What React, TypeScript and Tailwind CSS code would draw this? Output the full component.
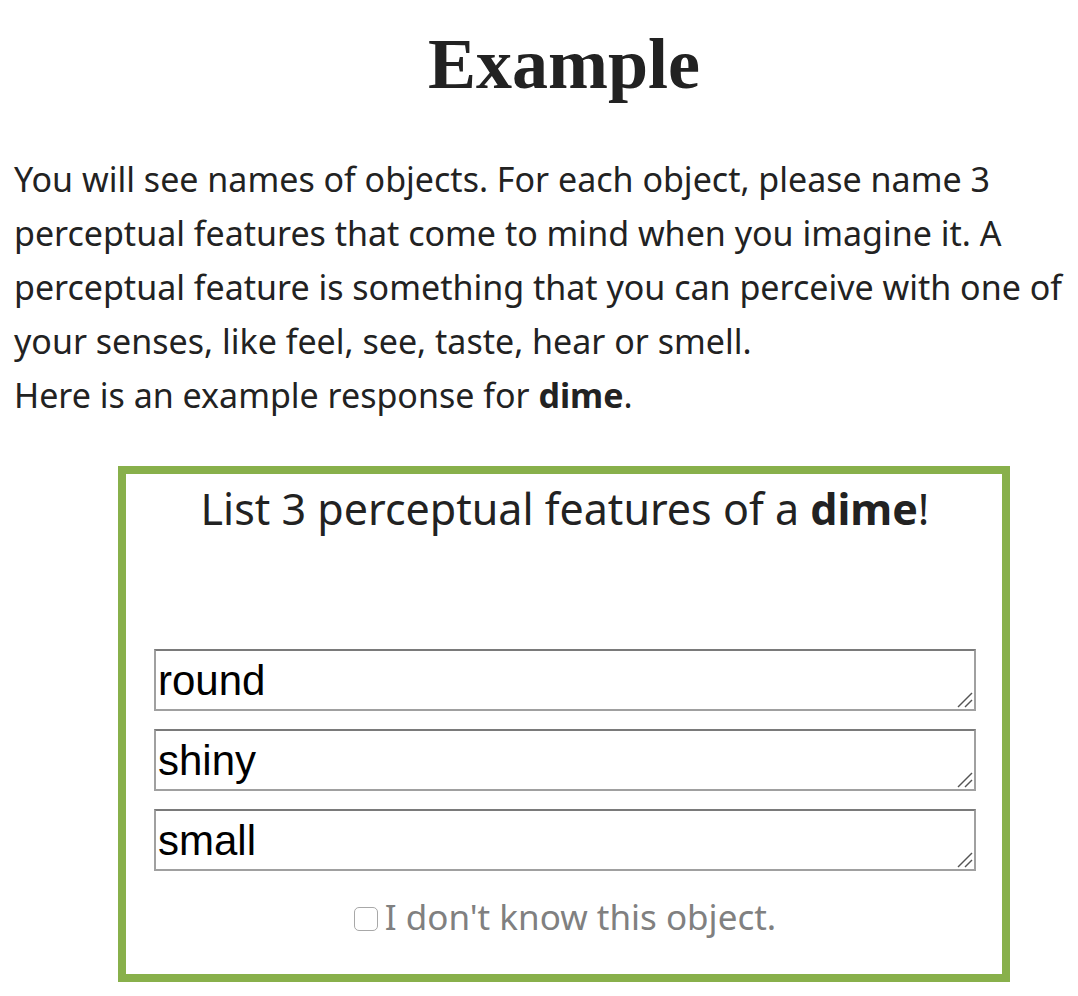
import React from "react";

const answers = ["round", "shiny", "small"];

function ResizeHandle() {
  return (
    <svg className="pointer-events-none absolute bottom-[3px] right-[3px]" width="17" height="17" viewBox="0 0 17 17">
      <path d="M16 2 L2 16" stroke="#555" strokeWidth="1.4" />
      <path d="M16 9 L9 16" stroke="#555" strokeWidth="1.4" />
    </svg>
  );
}

function Answer({ value }: { value: string }) {
  return (
    <div className="relative">
      <textarea
        readOnly
        value={value}
        rows={1}
        className="block h-[62px] w-full resize-none overflow-hidden border-2 border-[#a0a0a0] border-t-[#7a7a7a] bg-white px-[2px] pt-[6px] text-[42px] leading-[48px] text-black outline-none"
        style={{ fontFamily: '"Liberation Sans", Arial, sans-serif' }}
      />
      <ResizeHandle />
    </div>
  );
}

export default function App() {
  return (
    <div className="min-h-[996px] w-full overflow-hidden bg-white">
      <div className="ml-[14px] w-[1100px] text-[#222]" style={{ fontFamily: '"Noto Sans", "Open Sans", sans-serif' }}>
        <h1
          className="pt-[22px] text-center text-[72px] font-bold leading-[84px] text-[#222]"
          style={{ fontFamily: '"Liberation Serif", "Times New Roman", serif' }}
        >
          Example
        </h1>
        <p className="mt-[46px] text-[34px] leading-[54px]">
          You will see names of objects. For each object, please name 3 perceptual features that come to mind when you
          imagine it. A perceptual feature is something that you can perceive with one of your senses, like feel, see,
          taste, hear or smell.
          <br />
          Here is an example response for <b>dime</b>.
        </p>

        <div className="mx-auto mt-[44px] h-[516px] w-[892px] border-8 border-[#88b04b] bg-white pl-[28px] pr-[26px]">
          <div className="pt-[10px] text-center text-[43px] leading-[50px] text-[#222]">
            List 3 perceptual features of a <b>dime</b>!
          </div>
          <div className="mt-[115px] flex flex-col gap-[18px]">
            {answers.map((a) => (
              <Answer key={a} value={a} />
            ))}
          </div>
          <label className="mt-[26px] flex items-center justify-center text-[35px] leading-[40px] text-[#808080]">
            <span className="mr-[7px] mt-[4px] h-[24px] w-[24px] rounded-[5px] border border-[#a8a8a8] bg-white" />
            I don't know this object.
          </label>
        </div>
      </div>
    </div>
  );
}
